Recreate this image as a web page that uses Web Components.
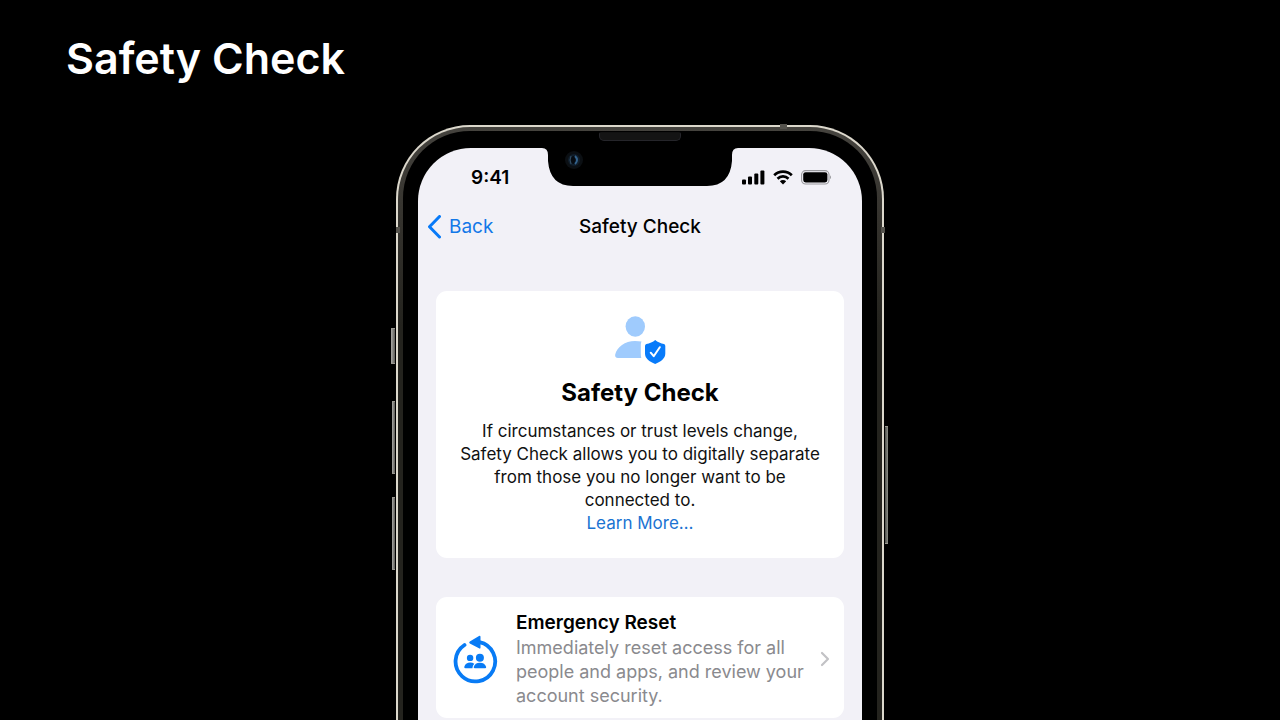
<!DOCTYPE html>
<html lang="en">
<head>
<meta charset="utf-8">
<meta name="viewport" content="width=device-width, initial-scale=1">
<title>Safety Check</title>
<style>
  html { background: #000; }
  body { margin: 0; height: 100vh; overflow: hidden; font-family: Inter, "Liberation Sans", sans-serif; }
</style>
</head>
<body>
<keynote-slide>
  <span slot="title">Safety Check</span>
  <phone-frame>
    <status-bar slot="status" time="9:41"></status-bar>
    <nav-bar back="Back">Safety Check</nav-bar>
    <intro-card>
      <span slot="title">Safety Check</span>
      If circumstances or trust levels change, Safety Check allows you to digitally separate from those you no longer want to be connected to.
      <span slot="link">Learn More…</span>
    </intro-card>
    <action-row>
      <span slot="title">Emergency Reset</span>
      Immediately reset access for all people and apps, and review your account security.
    </action-row>
  </phone-frame>
</keynote-slide>

<script>
const define = (name, html, setup) => customElements.define(name, class extends HTMLElement {
  constructor() {
    super();
    const template = document.createElement('template');
    template.innerHTML = html;
    this.attachShadow({ mode: 'open' }).append(template.content.cloneNode(true));
  }
  connectedCallback() { if (setup) setup(this, this.shadowRoot); }
});

define('keynote-slide', `
<style>
  :host { display: flex; flex-direction: column; min-height: 100%; box-sizing: border-box; background: #000; }
  header { box-sizing: border-box; height: 125px; padding: 30px 66px 0; }
  h1 { margin: 0; color: #fff; font-size: 43px; line-height: 56px; font-weight: 600; white-space: nowrap; }
  main { flex: 1; display: flex; justify-content: center; }
</style>
<header><h1><slot name="title"></slot></h1></header>
<main><slot></slot></main>`);

define('phone-frame', `
<style>
  :host { display: flex; position: relative; width: 488px; max-width: 100%; }
  .rim, .band, .bezel, .screen { flex: 1; min-width: 0; display: flex; box-sizing: border-box; }
  .rim { position: relative; padding: 2px 2px 0; border-radius: 74px 74px 0 0; background: #dcd8cc; }
  .band { padding: 4px 5px 0; border-radius: 72px 72px 0 0; background: linear-gradient(#45433e, #35332e 90px, #24231e 200px); }
  .bezel { padding: 17px 15px 0; border-radius: 67px 67px 0 0; background: #000; }
  .screen { position: relative; flex-direction: column; border-radius: 53px 53px 0 0; background: #f2f1f7; overflow: hidden; }
  .notch { position: absolute; top: 0; left: 50%; margin-left: -98px; }
  .speaker { position: absolute; top: 7px; left: 50%; width: 82px; height: 9px; margin-left: -41px; box-sizing: border-box; border: 1px solid #25252a; border-top-color: #111; border-radius: 2px 2px 5px 5px; background: #141414; }
  .key { position: absolute; box-sizing: border-box; border: 1px solid #99978f; border-width: 1px 0; background: linear-gradient(90deg, #aaa9a5, #5e5d59); }
  .mute { left: -5px; top: 203px; width: 4px; height: 36px; }
  .up { left: -4px; top: 276px; width: 3px; height: 73px; }
  .down { left: -4px; top: 372px; width: 3px; height: 73px; }
  .power { right: -4px; top: 301px; width: 3px; height: 118px; background: linear-gradient(90deg, #4d4e49, #8c8e88); }
  .seam { position: absolute; background: #55534d; width: 4px; height: 6px; top: 102px; }
  .seam.l { left: 0; } .seam.r { right: -1px; } .seam.t { top: -1px; right: 97px; width: 7px; height: 5px; }
</style>
<span class="key mute"></span><span class="key up"></span><span class="key down"></span><span class="key power"></span>
<div class="rim">
  <div class="band"><div class="bezel"><div class="screen">
    <slot name="status"></slot>
    <slot></slot>
    <svg class="notch" width="196" height="40" viewBox="0 0 196 40" aria-hidden="true">
      <path d="M0 0Q6 0 6 7V13Q8 38 31 38H165Q188 38 190 13V7Q190 0 196 0Z"/>
      <circle cx="32" cy="12" r="9" fill="#0b0f13"/>
      <circle cx="32" cy="12" r="6" fill="#101e2b"/>
      <ellipse cx="32" cy="12" rx="3" ry="4" fill="#050a10"/>
      <path d="M29 8q-2 4 0 8" stroke="#334e65" fill="none"/><path d="M33 8q4 4 0 8" stroke="#33628c" stroke-width="2" fill="none"/>
    </svg>
  </div></div></div>
  <span class="speaker"></span>
  <span class="seam l"></span><span class="seam r"></span><span class="seam t"></span>
</div>`);

define('status-bar', `
<style>
  :host { display: flex; align-items: center; justify-content: space-between; box-sizing: border-box; height: 60px; padding: 0 30px 0 53px; color: #000; }
  time { font-size: 19px; line-height: 24px; font-weight: 600; }
  .icons { display: flex; align-items: center; gap: 8px; }
  svg { display: block; }
</style>
<time></time>
<div class="icons">
  <svg width="23" height="16" viewBox="0 0 23 16" aria-label="Signal">
    <rect x="0" y="9.500" width="4" height="5" rx="1"/><rect x="6" y="6.500" width="4" height="8" rx="1"/><rect x="12.300" y="3.500" width="4" height="11" rx="1"/><rect x="18.400" y=".5" width="4" height="14" rx="1"/>
  </svg>
  <svg width="20" height="16" viewBox="0 0 20 16" aria-label="Wi-Fi">
    <g fill="none" stroke="#000" stroke-width="2.700"><path d="M1.200 5.200A12.600 12.600 0 0 1 18.800 5.200"/><path d="M4.500 8.700A7.900 7.900 0 0 1 15.500 8.700"/></g>
    <path d="M10 14.500L6.800 11.200Q10 8.700 13.200 11.200Z"/>
  </svg>
  <svg width="31" height="16" viewBox="0 0 31 16" aria-label="Battery">
    <rect x=".6" y=".6" width="27.400" height="13.400" rx="4" fill="none" stroke="#98989c" stroke-width="1.100"/>
    <rect x="2.200" y="2.200" width="24.200" height="10.200" rx="2.400"/>
    <path d="M29 5.300Q31 7.300 29 9.300Z" fill="#98989c"/>
  </svg>
</div>`, (host, root) => { root.querySelector('time').textContent = host.getAttribute('time'); });

define('nav-bar', `
<style>
  :host { display: grid; grid-template-columns: 1fr auto 1fr; align-items: center; height: 38px; padding: 0 9px; margin-bottom: 45px; color: #000; }
  button { display: flex; align-items: center; gap: 8px; justify-self: start; margin: 0; padding: 0; border: 0; background: none; color: #1278e8; font: 400 19px/24px Inter, sans-serif; }
  h2 { margin: 0; font-size: 19px; line-height: 24px; font-weight: 500; white-space: nowrap; }
</style>
<button type="button">
  <svg width="14" height="24" viewBox="0 0 14 24" aria-hidden="true"><path d="M12.500 1.500L2.500 11.800L12.500 22" fill="none" stroke="#087af8" stroke-width="3" stroke-linecap="round" stroke-linejoin="round"/></svg>
  <span></span>
</button>
<h2><slot></slot></h2>`, (host, root) => { root.querySelector('span').textContent = host.getAttribute('back'); });

define('intro-card', `
<style>
  :host { display: flex; flex-direction: column; align-items: center; margin: 0 18px 39px; padding: 25px 24px 23px; border-radius: 11px; background: #fff; color: #111; text-align: center; }
  svg { display: block; margin-bottom: 13px; }
  h3 { margin: 0 0 11px; color: #000; font-size: 24px; line-height: 32px; font-weight: 700; }
  p { margin: 0; font-size: 17px; line-height: 23px; }
  a { color: #1a73d2; font-size: 17px; line-height: 23px; text-decoration: none; }
</style>
<svg width="52" height="48" viewBox="0 0 52 48" aria-hidden="true">
  <ellipse cx="21.300" cy="10.500" rx="9.700" ry="10.300" fill="#9fcbfd"/>
  <path d="M27.300 42H4C1.800 42 .8 40.600 1.200 38.500C3 31 11 25 21 25Q24.500 25 27.500 25.500C26.800 27 26.800 28.500 26.800 30V37Q26.800 40 27.300 42Z" fill="#9fcbfd"/>
  <path d="M41.200 24C43.500 26 47 27.400 50 28Q51.300 28.300 51.300 30V37.500C51.300 42.500 47 45.500 41.200 48C35.400 45.500 31 42.500 31 37.500V30Q31 28.300 32.400 28C35.500 27.400 39 26 41.200 24Z" fill="#087bfa"/>
  <path d="M36.700 36.700L39.700 40.200L45.800 31.200" fill="none" stroke="#fff" stroke-width="2" stroke-linecap="round" stroke-linejoin="round"/>
</svg>
<h3><slot name="title"></slot></h3>
<p><slot></slot></p>
<a href="#learn-more"><slot name="link"></slot></a>`);

define('action-row', `
<style>
  :host { display: block; margin: 0 18px; border-radius: 11px; background: #fff; }
  a { display: flex; align-items: center; padding: 13px 14px 10px 17px; color: #8a8a8e; text-decoration: none; }
  .text { flex: 1; min-width: 0; margin: 0 12px 0 18px; }
  svg { display: block; flex: none; }
  h3 { margin: 0; color: #000; font-size: 19px; line-height: 26px; font-weight: 600; }
  p { margin: 0; font-size: 18px; line-height: 24px; }
</style>
<a href="#emergency-reset">
  <svg width="45" height="49" viewBox="0 0 45 49" aria-hidden="true">
    <path d="M11.500 10A19.800 19.800 0 1 0 26.500 7.200" fill="none" stroke="#087bf5" stroke-width="3.800" stroke-linecap="round"/>
    <g fill="#087bf5">
      <path d="M16.800 6.500L26 1Q27.500 .3 27.500 2V12.500Q27.500 14.300 26 13.300L16.800 8.400Q15.500 7.500 16.800 6.500Z"/>
      <circle cx="17.100" cy="22.900" r="3.200"/><path d="M19.600 33.300H12.500Q11 33.300 11.300 31.800C12.200 29 14.500 27.600 17.200 27.600Q19.500 27.600 21.300 28.700Q19.500 30.400 19.400 33.300Z"/>
      <circle cx="26.900" cy="22.700" r="4"/><path d="M22 33.300Q20.500 33.300 20.700 32C21.500 29.300 23.500 27.800 26.900 27.800S32.300 29.300 33.200 32Q33.300 33.300 32 33.300Z"/>
    </g>
  </svg>
  <div class="text"><h3><slot name="title"></slot></h3><p><slot></slot></p></div>
  <svg width="10" height="16" viewBox="0 0 10 16" aria-hidden="true"><path d="M2 2L8 8L2 14" fill="none" stroke="#c2c2c5" stroke-width="2.200" stroke-linecap="round" stroke-linejoin="round"/></svg>
</a>`);
</script>
</body>
</html>
